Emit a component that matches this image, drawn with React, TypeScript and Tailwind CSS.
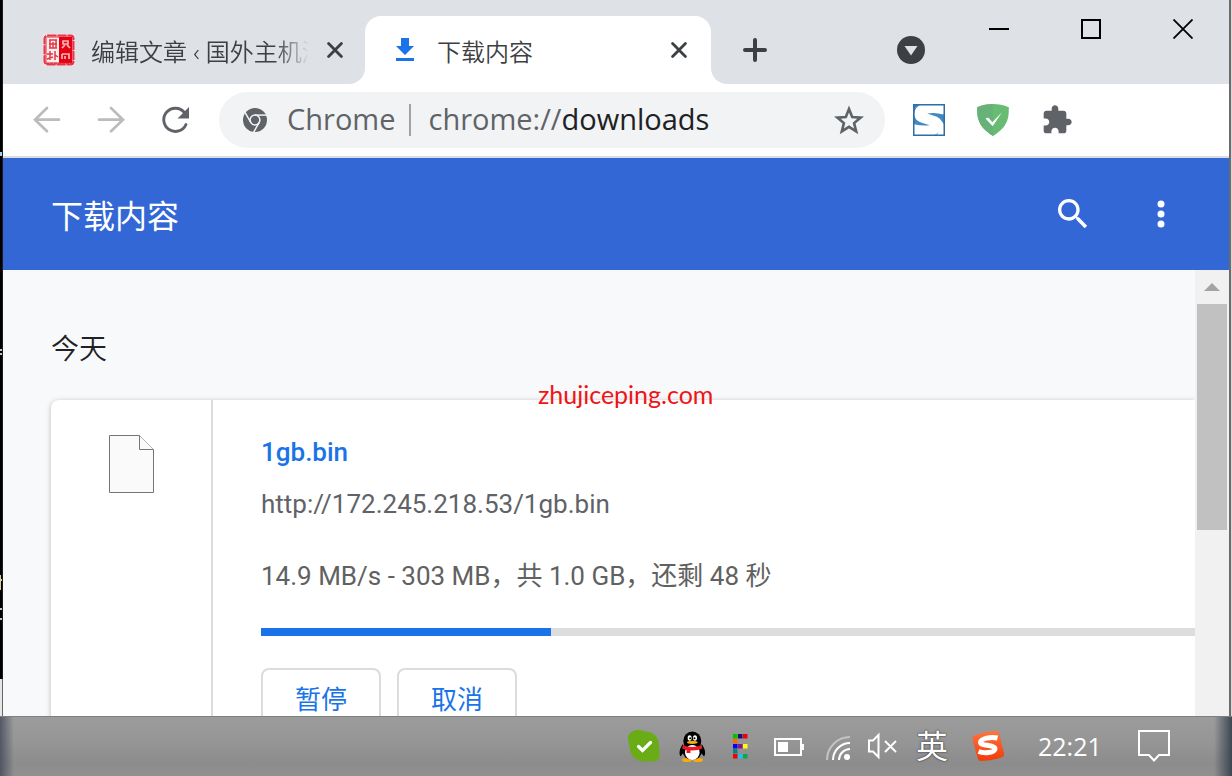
import React from "react";

const cjk = "font-['Noto_Sans','Noto_Sans_CJK_SC',sans-serif]";
const roboto = "font-[Roboto,'Noto_Sans_CJK_SC',sans-serif]";

function CloseGlyph() {
  return (
    <svg className="size-4" viewBox="0 0 16 16" fill="none" stroke="#3c4043" strokeWidth="2.8" strokeLinecap="round">
      <path d="M1.6 1.6 14.4 14.4M14.4 1.6 1.6 14.4" />
    </svg>
  );
}

function SealIcon() {
  return (
    <svg className="size-8 shrink-0" viewBox="0 0 32 32" aria-hidden="true">
      <rect width="32" height="32" fill="#fbe3e5" />
      <rect x="1.500" y="1.500" width="29" height="29" rx="3" fill="#f08a92" stroke="#e0394a" strokeWidth="2" strokeDasharray="9 1" />
      <rect x="4" y="4" width="12" height="24" fill="#fdeeee" />
      <rect x="16" y="3" width="13" height="26" fill="#e60012" />
      <path d="M6 6h8M6 10h8M6 14h8M7 6v8M13 6v8M10 8v6M4 20h6M7 17v9M4 25l6-2M12 17v9M12 21l3 2" stroke="#e0394a" strokeWidth="1.500" fill="none" />
      <path d="M20 7h5v3h-5zM19 14l3-3M24 11l3 3M19 20h7v5M19 20v5M22 22v3" stroke="#f9b4b8" strokeWidth="1.700" fill="none" />
      <path d="M3 29.500h26" stroke="#e0394a" strokeWidth="1.500" strokeDasharray="3 1" />
    </svg>
  );
}

function TabStrip() {
  return (
    <div className="flex h-[84px] shrink-0 bg-white">
      <div className="flex w-[362px] items-center rounded-br-2xl bg-[#dee1e6] pt-4 pl-10">
        <SealIcon />
        <a
          href="#edit"
          className={`${cjk} ml-4 w-[220px] overflow-hidden pt-1 text-2xl font-[350] whitespace-nowrap text-[#3c4043] [mask-image:linear-gradient(to_right,black_84%,transparent_99%)]`}
        >
          编辑文章 ‹ 国外主机测
        </a>
        <button aria-label="关闭标签页" className="ml-4"><CloseGlyph /></button>
      </div>
      <div className="w-[346px] bg-[#dee1e6] pt-4">
        <div className="flex h-full items-center rounded-t-2xl bg-white pr-6 pl-6">
          <svg className="size-8" viewBox="0 0 32 32" fill="#1a73e8" aria-hidden="true">
            <path d="M12 4h8v8h5l-9 9-9-9h5zM7 24h18v3H7z" />
          </svg>
          <a href="#downloads" className={`${cjk} ml-4 flex-1 pt-1 text-2xl font-[350] text-[#3c4043]`}>下载内容</a>
          <button aria-label="关闭标签页"><CloseGlyph /></button>
        </div>
      </div>
      <div className="flex flex-1 items-start justify-between rounded-bl-2xl bg-[#dee1e6]">
        <button aria-label="新标签页" className="mt-[38px] ml-8">
          <svg className="size-6" viewBox="0 0 24 24" stroke="#3c4043" strokeWidth="4" strokeLinecap="round">
            <path d="M2 12h20M12 2v20" />
          </svg>
        </button>
        <div className="flex items-start">
          <button aria-label="搜索标签页" className="mt-9 mr-7">
            <svg className="size-7" viewBox="0 0 28 28">
              <circle cx="14" cy="14" r="14" fill="#3c4043" />
              <path d="M7.5 10h13L14 19.5z" fill="#dee1e6" />
            </svg>
          </button>
          <button aria-label="最小化" className="flex h-[58px] w-[92px] items-center justify-center">
            <svg className="size-5" viewBox="0 0 20 20"><path d="M0 9h20v2H0z" /></svg>
          </button>
          <button aria-label="最大化" className="flex h-[58px] w-[92px] items-center justify-center">
            <svg className="size-5" viewBox="0 0 20 20"><path d="M1 1h18v18H1z" fill="none" stroke="#000" strokeWidth="2" /></svg>
          </button>
          <button aria-label="关闭" className="flex h-[58px] w-[92px] items-center justify-center">
            <svg className="size-5" viewBox="0 0 20 20"><path d="M.5.5l19 19M19.5.5l-19 19" stroke="#000" strokeWidth="1.8" /></svg>
          </button>
        </div>
      </div>
    </div>
  );
}

const toolButton = "flex h-14 w-16 shrink-0 items-center justify-center";

function Toolbar() {
  return (
    <div className="flex h-[74px] shrink-0 items-center border-b-2 border-[#dadce0] bg-white pr-[140px] pl-3">
      <button aria-label="后退" className={toolButton}>
        <svg className="size-8" viewBox="0 0 32 32" fill="none" stroke="#babcbe" strokeWidth="2.7">
          <path d="M28 15.7H4.500M16 4 4 15.7l12 11.6" strokeLinecap="round" />
        </svg>
      </button>
      <button aria-label="前进" className={toolButton}>
        <svg className="size-8" viewBox="0 0 32 32" fill="none" stroke="#babcbe" strokeWidth="2.7">
          <path d="M4 15.7h23.500M16 4l12 11.7-12 11.6" strokeLinecap="round" />
        </svg>
      </button>
      <button aria-label="重新加载" className={toolButton}>
        <svg className="size-8" viewBox="0 0 32 32">
          <path d="M25.4 8.5A11.6 11.6 0 1 0 27 20.5" fill="none" stroke="#5f6368" strokeWidth="2.9" strokeLinecap="round" />
          <path d="M30 3v11.4H18.6z" fill="#5f6368" />
        </svg>
      </button>
      <div className="mx-3 flex h-14 min-w-0 flex-1 items-center rounded-full bg-[#f1f3f4] pr-5 pl-6 font-['Open_Sans','Noto_Sans',sans-serif] text-[29px] leading-[54px] text-[#5f6368]">
        <svg className="size-6 shrink-0" viewBox="-12 -12 24 24" aria-hidden="true">
          <circle r="12" fill="#5f6368" />
          <g stroke="#f1f3f4" strokeWidth="1.5" fill="none">
            <circle r="4.9" />
            <path d="M0-4.9H11.5" />
            <path d="M0-4.9H11.5" transform="rotate(120)" />
            <path d="M0-4.9H11.5" transform="rotate(240)" />
          </g>
        </svg>
        <span className="ml-5 pb-0.5">Chrome</span>
        <span className="mr-[17px] ml-3.5 h-8 w-0.5 shrink-0 bg-[#a0a2a5]" />
        <label htmlFor="address" className="pb-0.5">chrome://</label>
        <input
          id="address"
          defaultValue="downloads"
          className="h-14 min-w-0 flex-1 bg-transparent pb-1 text-[#202124] outline-none"
        />
        <button aria-label="为此标签页添加书签" className="shrink-0">
          <svg className="size-8" viewBox="0 0 32 32" fill="none" stroke="#5f6368" strokeWidth="2.6">
            <path d="M16 5l3.2 8 8.5.6-6.6 5.5 2.1 8.3L16 22.9l-7.2 4.5 2.1-8.3-6.6-5.5 8.5-.6z" />
          </svg>
        </button>
      </div>
      <button aria-label="S 扩展程序" className={toolButton}>
        <svg className="size-8" viewBox="0 0 32 32">
          <rect width="32" height="32" fill="#4288c2" />
          <path d="M32 5.500C22 2.500 7 3 6.500 10C6.500 16 24.500 14.500 24.500 21.500C24 27 12 28 0 25.500" fill="none" stroke="#fff" strokeWidth="10.500" />
          <path d="M19 13C25 15 30 17 31 21V31H23C28 28 29 20 24 17z" fill="#fff" />
          <path d="M.75.75h30.500v30.500H.75z" fill="none" stroke="#2c6fa8" strokeWidth="1.500" />
        </svg>
      </button>
      <button aria-label="广告拦截" className={toolButton}>
        <svg className="size-8" viewBox="0 0 32 32">
          <path d="M16 0C11 0 5 1 .2 3.200C.2 13 .2 22 16 32C31.800 22 31.800 13 31.800 3.200C27 1 21 0 16 0z" fill="#68bc71" />
          <path d="M16 0C11 0 5 1 .2 3.200C.2 13 .2 22 16 32z" fill="#67b279" />
          <path d="M8.500 14.500c1.800-1.200 3.300-.6 4.100.5l2.700 3.300L24.800 8.500 15.700 22.200z" fill="#fff" />
        </svg>
      </button>
      <button aria-label="扩展程序" className={toolButton}>
        <svg className="size-8" viewBox="0 0 24 24" fill="#5f6368">
          <path d="M20.500 11H19V7c0-1.100-.9-2-2-2h-4V3.500C13 2.120 11.880 1 10.500 1S8 2.120 8 3.500V5H4c-1.100 0-1.990.9-1.990 2v3.800H3.500c1.490 0 2.700 1.210 2.700 2.700s-1.210 2.700-2.700 2.700H2V20c0 1.100.9 2 2 2h3.800v-1.500c0-1.490 1.210-2.700 2.700-2.700 1.490 0 2.700 1.210 2.700 2.700V22H17c1.100 0 2-.9 2-2v-4h1.500c1.380 0 2.500-1.120 2.500-2.500S21.880 11 20.500 11z" />
        </svg>
      </button>
    </div>
  );
}

function PageHeader() {
  return (
    <header className="flex h-28 shrink-0 items-center bg-[#3367d6] px-12 text-white">
      <h1 className={`${cjk} flex-1 pt-1 text-[32px]`}>下载内容</h1>
      <button aria-label="搜索" className="mr-12">
        <svg className="size-10" viewBox="0 0 24 24" fill="currentColor">
          <path d="M15.500 14h-.79l-.28-.27C15.410 12.590 16 11.110 16 9.500 16 5.910 13.090 3 9.500 3S3 5.910 3 9.500 5.910 16 9.500 16c1.610 0 3.090-.59 4.230-1.570l.27.28v.79l5 4.990L20.490 19l-4.990-5zm-6 0C7.010 14 5 11.990 5 9.500S7.010 5 9.500 5 14 7.010 14 9.500 11.990 14 9.500 14z" />
        </svg>
      </button>
      <button aria-label="更多操作">
        <svg className="size-10" viewBox="0 0 24 24" fill="currentColor">
          <circle cx="12" cy="6" r="2.100" /><circle cx="12" cy="12" r="2.100" /><circle cx="12" cy="18" r="2.100" />
        </svg>
      </button>
    </header>
  );
}

const actionButton =
  "h-16 w-[120px] rounded-lg border-2 border-[#dadce0] text-[26px] font-normal text-[#1a73e8]";

function Downloads() {
  const progress = 31;
  return (
    <main className="relative min-w-0 flex-1 overflow-hidden bg-[#f8f9fb] pt-14 pl-12">
      <h2 className={`${cjk} mb-[30px] text-[28px] leading-[44px] font-[350] text-[#202124]`}>今天</h2>
      <article className={`${roboto} flex rounded-tl-lg bg-white pb-8 text-[26px] leading-10 text-[#5f6368] shadow-[0_1px_5px_rgba(60,64,67,0.35)]`}>
        <div className="flex w-[162px] shrink-0 justify-center border-r-2 border-[#dadce0] pt-[35px]">
          <svg className="h-[59px] w-11 overflow-visible" viewBox="0 0 44 59" fill="#fafafa" stroke="#757575" aria-hidden="true">
            <path d="M.5.5h30l14 14v43H.5z" />
            <path d="M30.500.5v14h14" />
          </svg>
        </div>
        <div className="min-w-0 flex-1 pt-8 pl-12">
          <a href="#file" className="block font-medium text-[#1a73e8]">1gb.bin</a>
          <a href="#source" className="mt-3 block">http://172.245.218.53/1gb.bin</a>
          <p className="mt-8 font-normal text-[#616161]">14.9 MB/s - 303 MB，共 1.0 GB，还剩 48 秒</p>
          <div role="progressbar" aria-label="下载进度" aria-valuenow={progress} className="mt-8 h-2 bg-[#dddddd]">
            <div className="h-full bg-[#1a73e8]" style={{ width: `${progress}%` }} />
          </div>
          <div className="mt-8 flex gap-4">
            <button className={actionButton}>暂停</button>
            <button className={actionButton}>取消</button>
          </div>
        </div>
      </article>
      <span className="absolute top-[106px] left-[535px] font-[Lato,sans-serif] text-[25px] text-[#f01414]">zhujiceping.com</span>
    </main>
  );
}

function ScrollTrack() {
  return (
    <div className="flex w-[34px] shrink-0 flex-col bg-[#f1f1f1] px-0.5">
      <button aria-label="向上滚动" className="flex h-[34px] items-center justify-center">
        <svg className="h-2 w-4" viewBox="0 0 16 8" fill="#a3a3a3"><path d="M8 0l8 8H0z" /></svg>
      </button>
      <div className="h-[226px] bg-[#c1c1c1]" />
    </div>
  );
}

const trayItem = "flex h-full w-12 items-center justify-center";

const pixels: [number, number, string][] = [
  [0, 0, "#00c400"], [1, 0, "#12127a"], [2, 0, "#f40000"],
  [0, 1, "#ff6a00"],
  [0, 2, "#0000ff"], [1, 2, "#8b128b"], [2, 2, "#ffff00"],
  [0, 3, "#0d8080"],
  [0, 4, "#f40000"], [1, 4, "#25bdf0"], [2, 4, "#0ca84c"],
];

function Taskbar() {
  return (
    <footer className="flex h-[60px] shrink-0 items-center justify-end bg-[linear-gradient(to_right,rgb(60_66_84/0.75),transparent_14px),linear-gradient(to_left,rgb(50_62_74/0.9),transparent_18px),linear-gradient(to_bottom,#9c9c9c,#959595_45%,#8b8c8b_78%,#909090)] pr-10 text-white shadow-[inset_0_1px_0_#7c807f]">
      <button aria-label="安全软件" className={trayItem}>
        <svg className="size-8" viewBox="0 0 32 32">
          <path d="M9 0C13-.5 14 1.500 18 1.500C26 2 31 8 31 15C31 20 32 21 31.500 26C31 30 28 32 24 31.500C21 31 20 32 16 31.500C7 31 2 25 1.500 17C1.500 14 0 12 0 8C0 4 4 .5 9 0z" fill="#69ac16" />
          <path d="M10.500 16.500l4 4 8-8" fill="none" stroke="#fff" strokeWidth="3.200" strokeLinecap="round" />
        </svg>
      </button>
      <button aria-label="QQ" className={trayItem}>
        <svg className="size-8" viewBox="-1 -1 32 32">
          <ellipse cx="10" cy="29" rx="5" ry="2" fill="#faab07" /><ellipse cx="21" cy="29" rx="5" ry="2" fill="#faab07" />
          <path d="M6 13C2 18 2 23 3.500 25.500L7 21zM24.500 13C28.500 18 29 23 27 25.500L23.500 21z" />
          <ellipse cx="15.300" cy="19.500" rx="9.800" ry="9.500" />
          <ellipse cx="15.300" cy="10" rx="9" ry="9.500" />
          <ellipse cx="15.300" cy="21.500" rx="7.300" ry="7.500" fill="#fff" />
          <path d="M6 14c5 2.500 13.500 2.500 18.500 0l1 3.500c-6 2.500-14.500 2.500-20.500 0z" fill="#eb1923" />
          <path d="M9.500 17h4v5h-4z" fill="#eb1923" />
          <ellipse cx="12.600" cy="7" rx="2" ry="2.800" fill="#fff" /><ellipse cx="18" cy="7" rx="2" ry="2.800" fill="#fff" />
          <circle cx="13.100" cy="7.300" r="1" /><circle cx="17.500" cy="7.300" r="1" />
          <ellipse cx="15.300" cy="11.300" rx="5.300" ry="1.600" fill="#faab07" />
        </svg>
      </button>
      <button aria-label="输入工具" className={trayItem}>
        <svg className="size-8" viewBox="0 0 32 32">
          {pixels.map(([x, y, c]) => (
            <rect key={`${x}-${y}`} x={9 + x * 5} y={4 + y * 5} width="4.500" height="4.500" fill={c} />
          ))}
        </svg>
      </button>
      <button aria-label="电池" className={trayItem}>
        <svg className="size-8" viewBox="0 0 32 32" fill="#fff">
          <path d="M3 9h26v16H3z" fill="none" stroke="#fff" strokeWidth="2" />
          <path d="M6 12h10v10H6zM30 14h2v6h-2z" />
        </svg>
      </button>
      <button aria-label="无线网络" className={trayItem}>
        <svg className="size-8" viewBox="0 0 32 32" fill="none" stroke="#fff" strokeWidth="2">
          <path d="M7 30A23 23 0 0 1 30 7" stroke="#c4c4c4" />
          <path d="M13 30a17 17 0 0 1 17-17M19 30a11 11 0 0 1 11-11" />
          <circle cx="27" cy="27" r="3" fill="#fff" stroke="none" />
        </svg>
      </button>
      <button aria-label="静音" className={trayItem}>
        <svg className="size-8" viewBox="0 0 32 32" fill="none" stroke="#fff" strokeWidth="2">
          <path d="M1 10.500h4L10.500 5v22L5 21.500H1z" />
          <path d="M17 11l11 11M28 11 17 22" />
        </svg>
      </button>
      <button className={`${trayItem} ${cjk} text-[32px] leading-10 [text-shadow:0_0_1px_#333,0_0_2px_#333]`}>英</button>
      <button aria-label="搜狗输入法" className="flex h-full w-16 items-center justify-center">
        <svg className="size-8" viewBox="0 0 32 32">
          <defs><linearGradient id="flame" x2="0" y2="1"><stop stopColor="#ff7440" /><stop offset="1" stopColor="#f03c08" /></linearGradient></defs>
          <path d="M4 5C10 3 18 1 23 .8C26 .5 27 2 27.500 5L32 23C32.500 26 31 27.500 28 28C21 30 14 31 9 31C6.500 31 6 29 5 26L.5 9C0 6.500 1.500 5.500 4 5z" fill="url(#flame)" />
          <path d="M25.500 8C19 6.500 8.500 8.500 8.500 12.500C8.500 16 23.500 14.500 23 19C22.500 23 12 23.500 6.500 21.500" fill="none" stroke="#fff" strokeWidth="5" strokeLinejoin="round" />
        </svg>
      </button>
      <time className="w-24 pl-[18px] font-['Open_Sans','Noto_Sans',sans-serif] text-[25px] leading-[60px]">22:21</time>
      <button aria-label="通知" className="flex h-full w-[76px] items-center justify-center">
        <svg className="size-8" viewBox="0 0 32 32" fill="none" stroke="#fff" strokeWidth="2">
          <path d="M1 1h30v24H21l-5 5.500-5-5.500H1z" />
        </svg>
      </button>
    </footer>
  );
}

function BackgroundEdge() {
  return (
    <div className="flex w-[3px] shrink-0 flex-col bg-black" aria-hidden="true">
      <div className="flex-1 overflow-hidden border-r border-[#1c1c1c]">
        <svg className="h-[640px] w-[3px]" viewBox="0 0 3 640">
          <path d="M0 152h2v4H0z" fill="#9ed0e8" />
          <path d="M0 349h3v2H0zM0 353h3v2H0z" fill="#c4c4c4" />
          <path d="M0 575h1v15H0zM1 579h2v2H1z" fill="#d8d0a0" />
          <path d="M0 608h3v2H0zM0 618h3v2H0z" fill="#c0c0c0" />
        </svg>
      </div>
      <div className="h-[37px] border-r border-[#666] bg-[#e6e6e6]" />
    </div>
  );
}

export default function App() {
  return (
    <div className="flex h-screen flex-col overflow-hidden">
      <div className="flex min-h-0 flex-1">
        <BackgroundEdge />
        <div className="flex min-w-0 flex-1 flex-col">
          <TabStrip />
          <Toolbar />
          <PageHeader />
          <div className="flex min-h-0 flex-1">
            <Downloads />
            <ScrollTrack />
          </div>
        </div>
        <div className="w-[3px] shrink-0 border-r border-[#d8d8d8] bg-[#6b6b6b]" />
      </div>
      <Taskbar />
    </div>
  );
}
